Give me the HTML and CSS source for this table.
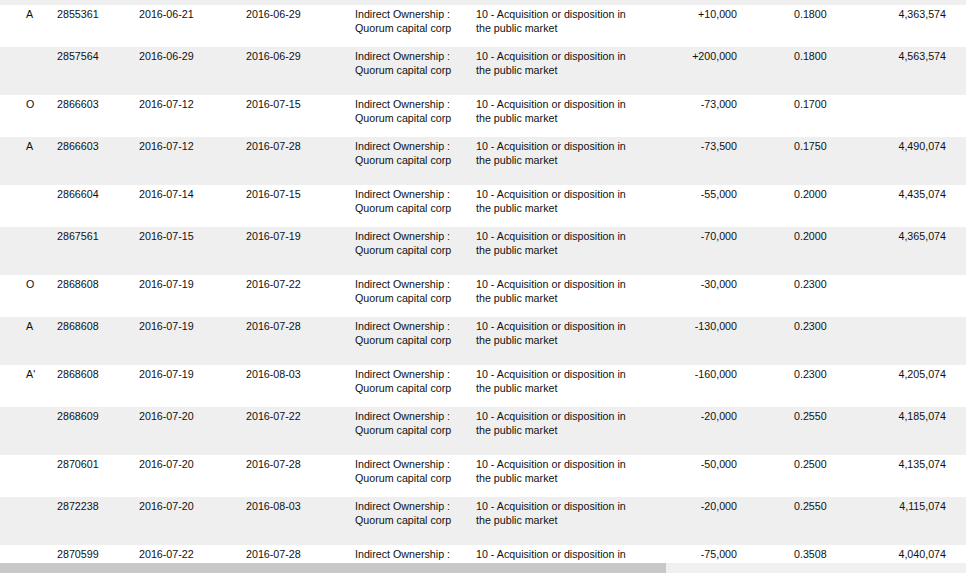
FILE: index.html
```html
<!DOCTYPE html>
<html>
<head>
<meta charset="utf-8">
<link rel="stylesheet" href="styles.css">
</head>
<body>
<div class="viewport">
<table class="grid">
<colgroup>
<col class="c-flag"><col class="c-id"><col class="c-d1"><col class="c-d2"><col class="c-own"><col class="c-nat"><col class="c-num"><col class="c-price"><col class="c-hold">
</colgroup>
<tbody>
<tr class="gray top"><td colspan="9"></td></tr>
<tr class="white"><td class="flag">A</td><td>2855361</td><td>2016-06-21</td><td>2016-06-29</td><td>Indirect Ownership :<br>Quorum capital corp</td><td>10 - Acquisition or disposition in<br>the public market</td><td class="num">+10,000</td><td class="price">0.1800</td><td class="hold">4,363,574</td></tr>
<tr class="gray"><td class="flag"></td><td>2857564</td><td>2016-06-29</td><td>2016-06-29</td><td>Indirect Ownership :<br>Quorum capital corp</td><td>10 - Acquisition or disposition in<br>the public market</td><td class="num">+200,000</td><td class="price">0.1800</td><td class="hold">4,563,574</td></tr>
<tr class="white"><td class="flag">O</td><td>2866603</td><td>2016-07-12</td><td>2016-07-15</td><td>Indirect Ownership :<br>Quorum capital corp</td><td>10 - Acquisition or disposition in<br>the public market</td><td class="num">-73,000</td><td class="price">0.1700</td><td class="hold"></td></tr>
<tr class="gray"><td class="flag">A</td><td>2866603</td><td>2016-07-12</td><td>2016-07-28</td><td>Indirect Ownership :<br>Quorum capital corp</td><td>10 - Acquisition or disposition in<br>the public market</td><td class="num">-73,500</td><td class="price">0.1750</td><td class="hold">4,490,074</td></tr>
<tr class="white"><td class="flag"></td><td>2866604</td><td>2016-07-14</td><td>2016-07-15</td><td>Indirect Ownership :<br>Quorum capital corp</td><td>10 - Acquisition or disposition in<br>the public market</td><td class="num">-55,000</td><td class="price">0.2000</td><td class="hold">4,435,074</td></tr>
<tr class="gray"><td class="flag"></td><td>2867561</td><td>2016-07-15</td><td>2016-07-19</td><td>Indirect Ownership :<br>Quorum capital corp</td><td>10 - Acquisition or disposition in<br>the public market</td><td class="num">-70,000</td><td class="price">0.2000</td><td class="hold">4,365,074</td></tr>
<tr class="white"><td class="flag">O</td><td>2868608</td><td>2016-07-19</td><td>2016-07-22</td><td>Indirect Ownership :<br>Quorum capital corp</td><td>10 - Acquisition or disposition in<br>the public market</td><td class="num">-30,000</td><td class="price">0.2300</td><td class="hold"></td></tr>
<tr class="gray"><td class="flag">A</td><td>2868608</td><td>2016-07-19</td><td>2016-07-28</td><td>Indirect Ownership :<br>Quorum capital corp</td><td>10 - Acquisition or disposition in<br>the public market</td><td class="num">-130,000</td><td class="price">0.2300</td><td class="hold"></td></tr>
<tr class="white"><td class="flag">A'</td><td>2868608</td><td>2016-07-19</td><td>2016-08-03</td><td>Indirect Ownership :<br>Quorum capital corp</td><td>10 - Acquisition or disposition in<br>the public market</td><td class="num">-160,000</td><td class="price">0.2300</td><td class="hold">4,205,074</td></tr>
<tr class="gray"><td class="flag"></td><td>2868609</td><td>2016-07-20</td><td>2016-07-22</td><td>Indirect Ownership :<br>Quorum capital corp</td><td>10 - Acquisition or disposition in<br>the public market</td><td class="num">-20,000</td><td class="price">0.2550</td><td class="hold">4,185,074</td></tr>
<tr class="white"><td class="flag"></td><td>2870601</td><td>2016-07-20</td><td>2016-07-28</td><td>Indirect Ownership :<br>Quorum capital corp</td><td>10 - Acquisition or disposition in<br>the public market</td><td class="num">-50,000</td><td class="price">0.2500</td><td class="hold">4,135,074</td></tr>
<tr class="gray"><td class="flag"></td><td>2872238</td><td>2016-07-20</td><td>2016-08-03</td><td>Indirect Ownership :<br>Quorum capital corp</td><td>10 - Acquisition or disposition in<br>the public market</td><td class="num">-20,000</td><td class="price">0.2550</td><td class="hold">4,115,074</td></tr>
<tr class="white last"><td class="flag"></td><td>2870599</td><td>2016-07-22</td><td>2016-07-28</td><td>Indirect Ownership :</td><td>10 - Acquisition or disposition in</td><td class="num">-75,000</td><td class="price">0.3508</td><td class="hold">4,040,074</td></tr>
</tbody>
</table>
</div>
<div class="hscroll"><div class="thumb"></div></div>
</body>
</html>
```
FILE: styles.css
```css
html, body {
  margin: 0;
  padding: 0;
  background: #ffffff;
}
body {
  width: 966px;
  height: 573px;
  overflow: hidden;
  font-family: "Liberation Sans", Arial, sans-serif;
  font-size: 10.7px;
  color: #111111;
}
.viewport {
  height: 563px;
  overflow: hidden;
}
.grid {
  width: 966px;
  table-layout: fixed;
  border-collapse: collapse;
  border-spacing: 0;
}
.c-flag { width: 57px; }
.c-id { width: 82px; }
.c-d1 { width: 107px; }
.c-d2 { width: 109px; }
.c-own { width: 121px; }
.c-nat { width: 184px; }
.c-num { width: 77px; }
.c-price { width: 123px; }
.c-hold { width: 106px; }
.grid td {
  padding: 2px 0 0 0;
  vertical-align: top;
  line-height: 14px;
  white-space: nowrap;
  text-align: left;
}
.grid tr.white { background: #ffffff; height: 42px; }
.grid tr.gray { background: #efefef; height: 48px; }
.grid tr.top { height: 5px; }
.grid tr.top td { padding: 0; height: 5px; }
.grid tr.last { height: 18px; }
.grid td.flag { padding-left: 26px; }
.grid td.num { text-align: right; }
.grid td.price { padding-left: 57px; }
.grid td.hold { text-align: right; padding-right: 20px; }
.hscroll {
  height: 10px;
  background: #f0f0f0;
  display: flex;
}
.thumb {
  width: 666px;
  height: 10px;
  background: #c8c8c8;
}
```
